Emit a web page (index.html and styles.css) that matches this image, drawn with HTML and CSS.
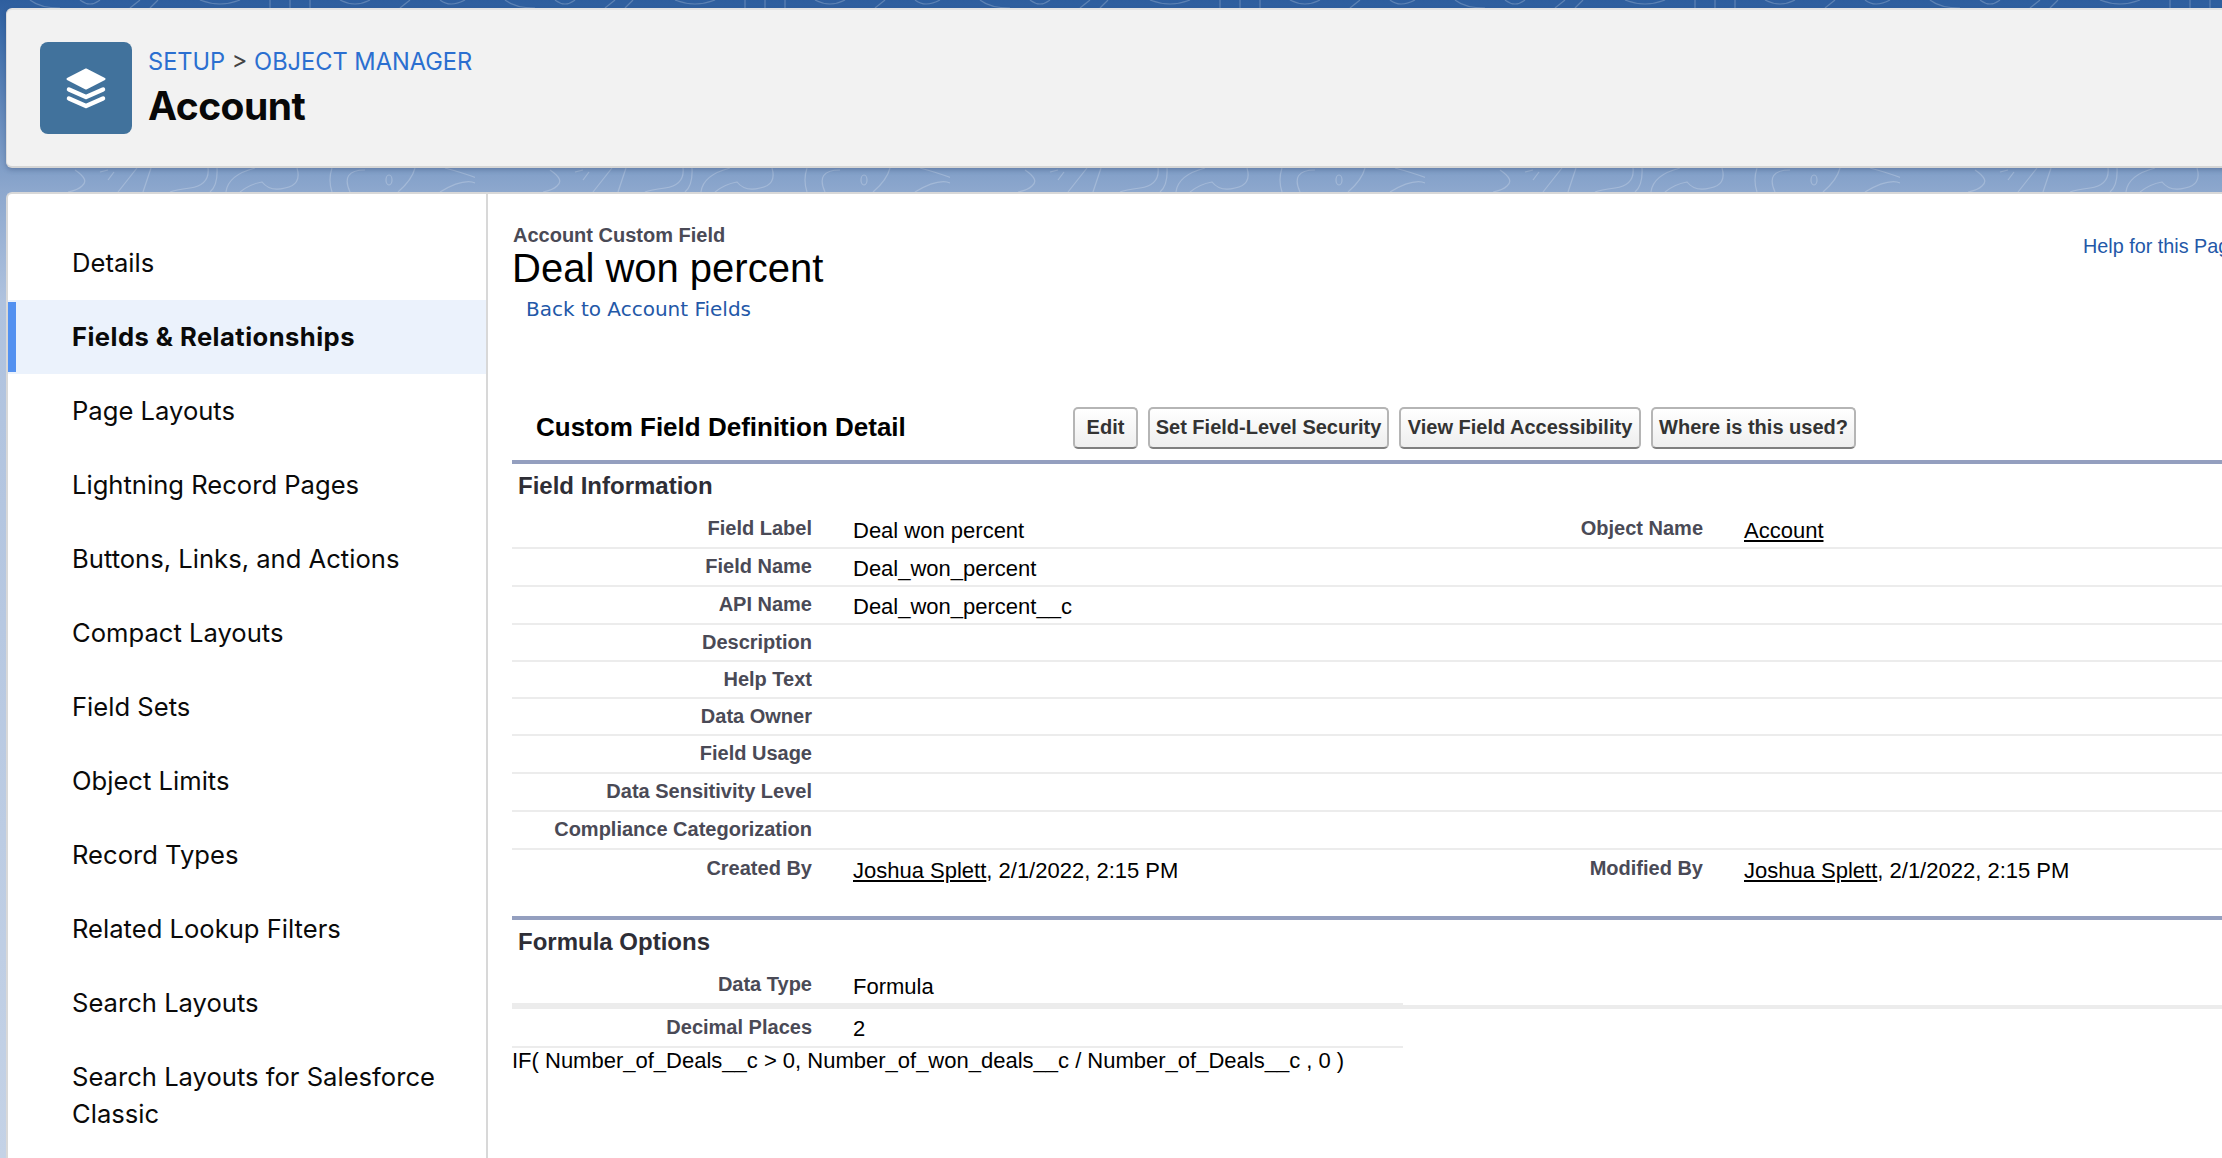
FILE: index.html
```html
<!DOCTYPE html>
<html lang="en">
<head>
<meta charset="utf-8">
<title>Account Custom Field: Deal won percent</title>
<link rel="stylesheet" href="styles.css">
</head>
<body>
<div class="page">
  <header class="head-card">
    <div class="obj-icon">
      <svg viewBox="0 0 92 92" width="92" height="92" aria-hidden="true">
        <path class="layer-top" d="M27.5 37 46 27.5 64.500 37 46 46.500Z"/>
        <polyline class="layer-line" points="29,47.500 46,55 63,47.500"/>
        <polyline class="layer-line" points="29,56.500 46,64 63,56.500"/>
      </svg>
    </div>
    <div class="head-text">
      <div class="crumbs"><a>SETUP</a> <span>&gt;</span> <a>OBJECT MANAGER</a></div>
      <h1 class="obj-title">Account</h1>
    </div>
  </header>

  <div class="main-card">
    <nav class="side">
      <a class="side-item">Details</a>
      <a class="side-item active">Fields &amp; Relationships</a>
      <a class="side-item">Page Layouts</a>
      <a class="side-item">Lightning Record Pages</a>
      <a class="side-item">Buttons, Links, and Actions</a>
      <a class="side-item">Compact Layouts</a>
      <a class="side-item">Field Sets</a>
      <a class="side-item">Object Limits</a>
      <a class="side-item">Record Types</a>
      <a class="side-item">Related Lookup Filters</a>
      <a class="side-item">Search Layouts</a>
      <a class="side-item">Search Layouts for Salesforce Classic</a>
    </nav>

    <main class="content">
      <div class="title-block">
        <div class="title-left">
          <div class="kicker">Account Custom Field</div>
          <h2 class="page-title">Deal won percent</h2>
          <a class="back">Back to Account Fields</a>
        </div>
        <a class="help">Help for this Page</a>
      </div>

      <div class="detail-head">
        <h3 class="detail-title">Custom Field Definition Detail</h3>
        <div class="btns">
          <button class="btn btn-edit">Edit</button>
          <button class="btn btn-set">Set Field-Level Security</button>
          <button class="btn btn-view">View Field Accessibility</button>
          <button class="btn btn-where">Where is this used?</button>
        </div>
      </div>

      <section class="section info">
        <h4 class="sec-title">Field Information</h4>
        <div class="row tall"><span class="lbl">Field Label</span><span class="val">Deal won percent</span><span class="lbl lbl2">Object Name</span><span class="val val2"><u>Account</u></span></div>
        <div class="row tall"><span class="lbl">Field Name</span><span class="val">Deal_won_percent</span></div>
        <div class="row tall"><span class="lbl">API Name</span><span class="val">Deal_won_percent__c</span></div>
        <div class="row short"><span class="lbl">Description</span></div>
        <div class="row short"><span class="lbl">Help Text</span></div>
        <div class="row short"><span class="lbl">Data Owner</span></div>
        <div class="row tall"><span class="lbl">Field Usage</span></div>
        <div class="row tall"><span class="lbl">Data Sensitivity Level</span></div>
        <div class="row tall"><span class="lbl">Compliance Categorization</span></div>
        <div class="row tall last"><span class="lbl">Created By</span><span class="val"><u>Joshua Splett</u>, 2/1/2022, 2:15 PM</span><span class="lbl lbl2">Modified By</span><span class="val val2"><u>Joshua Splett</u>, 2/1/2022, 2:15 PM</span></div>
      </section>

      <section class="section formula">
        <h4 class="sec-title">Formula Options</h4>
        <div class="full-rule">
          <div class="row half type-row"><span class="lbl">Data Type</span><span class="val">Formula</span></div>
        </div>
        <div class="row half dec-row"><span class="lbl">Decimal Places</span><span class="val">2</span></div>
        <div class="code">IF( Number_of_Deals__c &gt; 0, Number_of_won_deals__c / Number_of_Deals__c , 0 )</div>
      </section>
    </main>
  </div>
</div>
</body>
</html>
```
FILE: styles.css
```css
* { box-sizing: border-box; }
html, body { margin: 0; height: 100%; overflow: hidden; }
body {
  font-family: "Liberation Sans", Arial, sans-serif;
  color: #000;
  background-color: #b4c6e0;
  background-image:
    url("data:image/svg+xml,%3Csvg xmlns='http://www.w3.org/2000/svg' width='475' height='200' fill='none' stroke='%23ffffff' stroke-opacity='.22' stroke-width='1.2'%3E%3Cpath d='M75 170Q90 180 82 186Q78 190 68 192M100 172l8-2M108 180l6-8M137 168L118 192M151 168L143 192M208 168Q210 185 190 188Q175 190 170 192M217 168Q218 185 210 192M226 192Q228 175 255 168M297 168Q302 185 285 188Q270 192 262 182Q250 184 240 192M332 168Q328 180 332 192M350 192Q340 170 365 170M415 168Q412 180 398 192M445 168Q490 180 500 192M440 192Q460 180 472 182Q485 186 490 192'/%3E%3Cellipse cx='389' cy='180' rx='3' ry='5'/%3E%3Cpath d='M30 0Q40 8 60 8M80 0Q90 8 100 0M130 8L140 0M150 8L158 0M200 0Q220 8 240 0M270 8V0M290 8V0M310 8V0M340 0Q355 8 370 0M400 8L410 0M440 0Q450 8 465 0'/%3E%3C/svg%3E"),
    linear-gradient(180deg, #2e5e9e 0, #3a6aa8 30px, #8ca7cd 190px, #afc2de 300px, #c4d2e6 100%);
  background-repeat: repeat-x, no-repeat;
}
.page {
  width: 2260px;
  height: 1158px;
  padding: 8px 0 0 6px;
  display: flex;
  flex-direction: column;
  gap: 24px;
}

/* header */
.head-card {
  height: 160px;
  flex: none;
  display: flex;
  align-items: center;
  gap: 16px;
  padding: 0 0 0 33px;
  background: #f2f2f2;
  border-top: 2px solid #e3e3e3;
  border-bottom: 2px solid #d5d5d5;
  border-left: 1px solid #dcdcdc;
  border-radius: 6px 0 0 6px;
  box-shadow: 0 2px 5px rgba(30, 50, 90, .3);
}
.obj-icon {
  width: 92px;
  height: 92px;
  flex: none;
  background: #41729c;
  border-radius: 8px;
}
.obj-icon svg { display: block; }
.layer-top { fill: #fff; stroke: #fff; stroke-width: 2; stroke-linejoin: round; }
.layer-line { fill: none; stroke: #fff; stroke-width: 4.5; stroke-linejoin: round; stroke-linecap: round; }
.head-text { margin-top: -1px; }
.crumbs {
  font-family: Inter, sans-serif;
  font-size: 23.600px;
  line-height: 32px;
  color: #444;
}
.crumbs a { color: #2b6fd0; }
.obj-title {
  margin: 4px 0 0;
  font-family: Inter, sans-serif;
  font-size: 39px;
  line-height: 48px;
  font-weight: 700;
  letter-spacing: -.5px;
  color: #080808;
}

/* main */
.main-card {
  flex: 1;
  display: flex;
  background: #fff;
  border-top: 2px solid #d8d8d8;
  border-left: 2px solid #d8d8d8;
  border-radius: 6px 0 0 0;
  overflow: hidden;
}
.side {
  width: 480px;
  flex: none;
  padding-top: 32px;
  border-right: 2px solid #d8d8d8;
  font-family: Inter, sans-serif;
  font-size: 25.600px;
  color: #0a0a0a;
}
.side-item {
  display: flex;
  align-items: center;
  min-height: 74px;
  padding: 17px 40px 19px 64px;
  line-height: 37px;
}
.side-item:last-child { padding-top: 18px; }
.side-item.active {
  font-weight: 700;
  letter-spacing: .45px;
  background: #ebf2fc;
  position: relative;
}
.side-item.active::before {
  content: "";
  position: absolute;
  left: 0;
  top: 2px;
  bottom: 2px;
  width: 8px;
  background: #5391f0;
}

.content {
  flex: 1;
  min-width: 0;
  padding: 29px 0 0 24px;
}
.title-block {
  display: flex;
  justify-content: space-between;
  height: 178px;
}
.kicker {
  margin-left: 1px;
  font-size: 20px;
  font-weight: 700;
  line-height: 24px;
  color: #4a4a56;
}
.page-title {
  margin: -1px 0 0;
  font-size: 40px;
  font-weight: 400;
  line-height: 44px;
}
.back {
  display: block;
  margin: 6px 0 0 14px;
  font-family: "DejaVu Sans", Verdana, sans-serif;
  font-size: 20px;
  line-height: 26px;
  color: #2358a8;
}
.help {
  margin: 11px 0 0;
  font-size: 19.800px;
  line-height: 24px;
  color: #2358a8;
  white-space: nowrap;
  width: 177px;
}

.detail-head {
  display: flex;
  align-items: center;
  height: 53px;
  margin-bottom: 6px;
  padding-left: 24px;
}
.detail-title {
  margin: 0;
  width: 537px;
  flex: none;
  font-size: 26px;
  font-weight: 700;
}
.btns { display: flex; gap: 10px; }
.btn {
  height: 42px;
  padding: 0;
  font-family: "Liberation Sans", Arial, sans-serif;
  font-size: 20px;
  font-weight: 700;
  color: #333;
  background: linear-gradient(180deg, #fff, #eee);
  border: 2px solid #b5b5b5;
  border-bottom-color: #7f7f7f;
  border-radius: 5px;
  white-space: nowrap;
}
.btn-edit { width: 65px; }
.btn-set { width: 241px; }
.btn-view { width: 242px; }
.btn-where { width: 205px; }

.section { border-top: 4px solid #949fbf; }
.sec-title {
  margin: 0;
  padding-left: 6px;
  font-size: 24px;
  font-weight: 700;
  line-height: 44px;
  color: #2e2e36;
}
.info .sec-title { height: 47px; }
.row {
  display: flex;
  align-items: center;
  border-bottom: 2px solid #ececec;
}
.row.tall { height: 38px; }
.row.short { height: 37px; }
.row.last { border-bottom: 0; }
.lbl {
  width: 300px;
  flex: none;
  text-align: right;
  font-size: 20px;
  font-weight: 700;
  color: #4a4a56;
  margin-top: -1px;
}
.val {
  margin-left: 41px;
  margin-top: 3px;
  font-size: 22px;
  white-space: nowrap;
}
.val u { text-underline-offset: 2px; }
.info .val { width: 550px; }
.info .val2 { width: auto; }
.section.info { height: 456px; }
.half { width: 891px; }
.full-rule { border-bottom: 4px solid #ececec; }
.formula .sec-title { height: 47px; }
.type-row { height: 38px; }
.dec-row { height: 39px; }
.code { font-size: 22px; line-height: 26px; }
```
